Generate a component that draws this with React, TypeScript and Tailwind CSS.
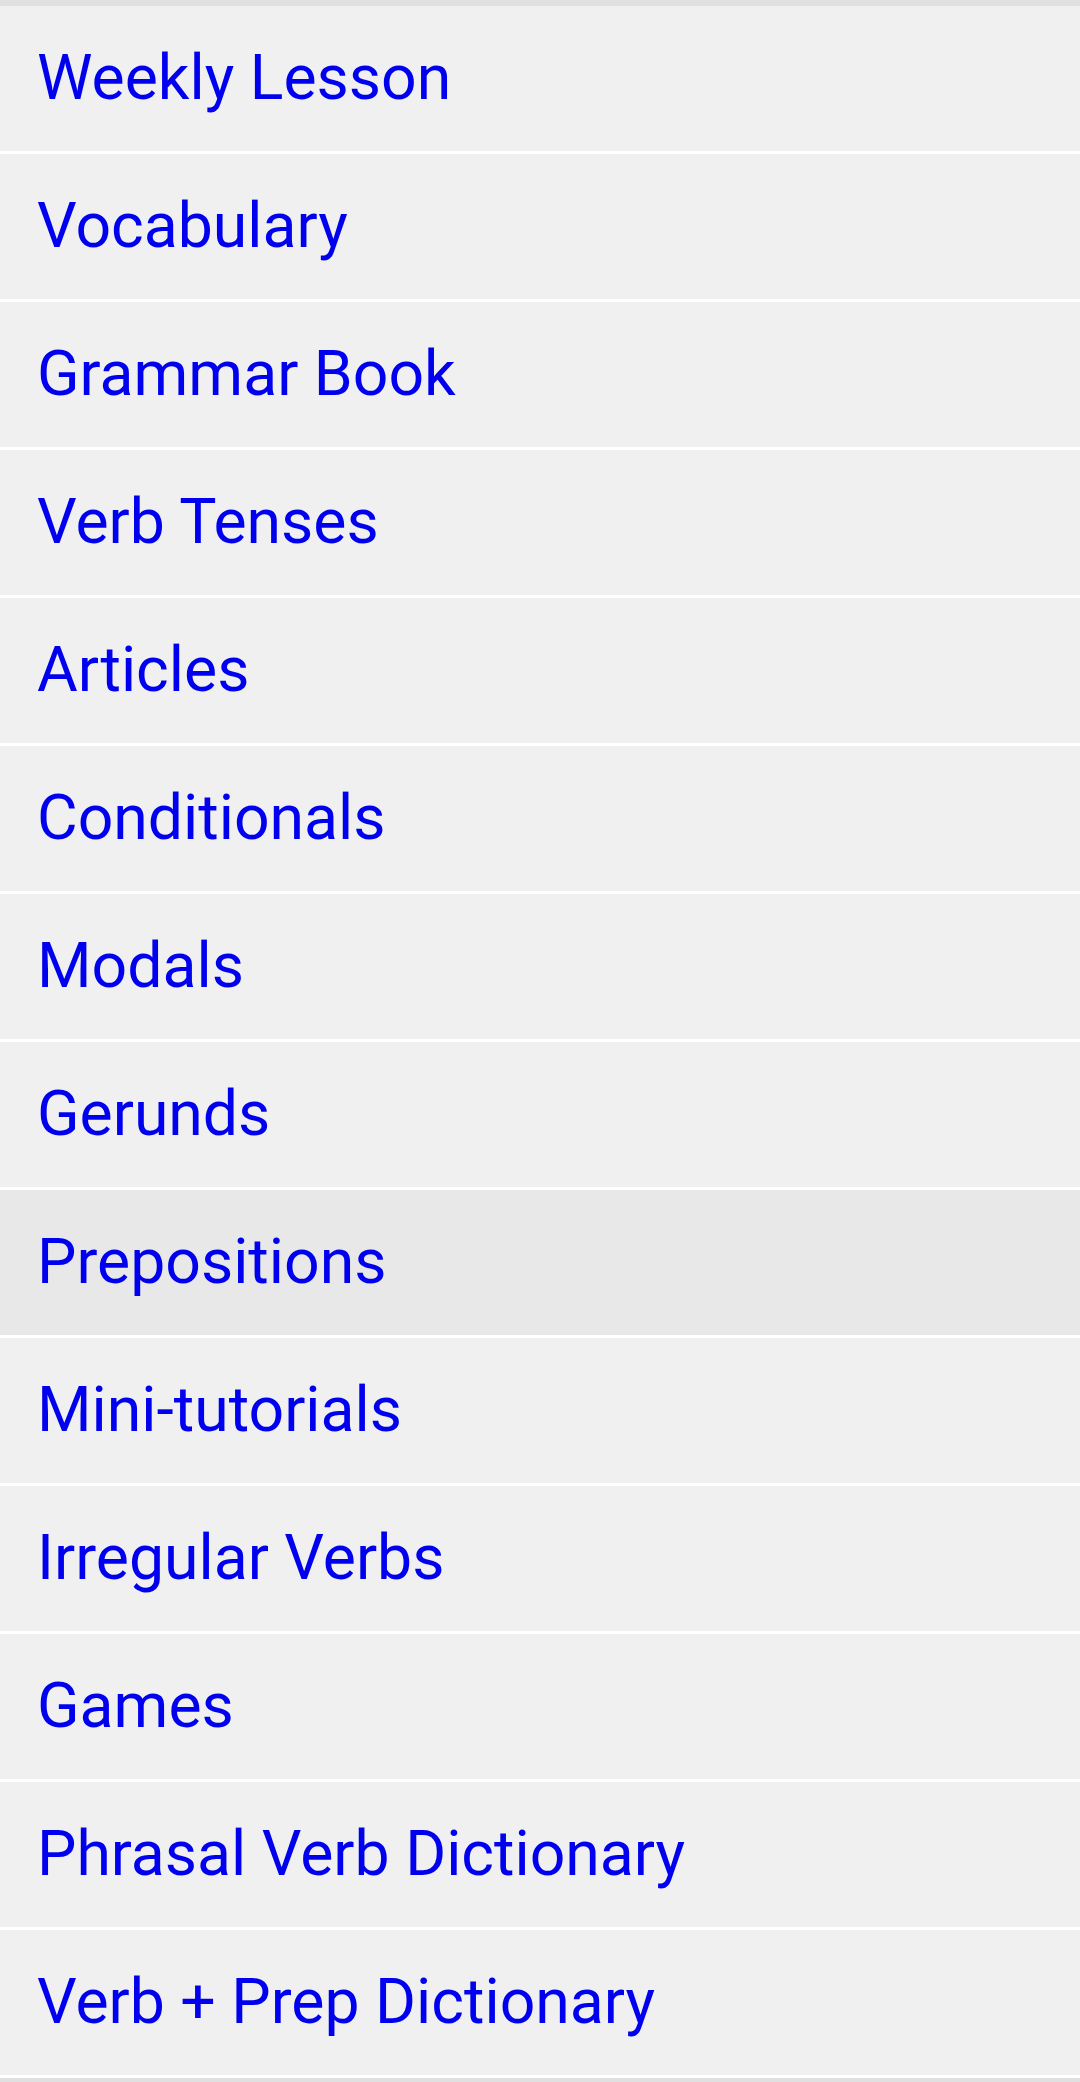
import React from "react";

const items = [
  "Weekly Lesson",
  "Vocabulary",
  "Grammar Book",
  "Verb Tenses",
  "Articles",
  "Conditionals",
  "Modals",
  "Gerunds",
  "Prepositions",
  "Mini-tutorials",
  "Irregular Verbs",
  "Games",
  "Phrasal Verb Dictionary",
  "Verb + Prep Dictionary",
];

export default function App() {
  return (
    <div
      className="w-[1080px] h-[2082px] bg-[#e0e0e0] pt-[6px] overflow-hidden"
      style={{ fontFamily: "Roboto, 'Noto Sans', sans-serif" }}
    >
      <ul className="flex flex-col">
        {items.map((label) => (
          <li
            key={label}
            className={`h-[148px] border-b-[3px] border-white ${
              label === "Prepositions" ? "bg-[#e8e8e8]" : "bg-[#f0f0f0]"
            }`}
          >
            <a
              href="#"
              className="block pl-[37px] pb-[1px] text-[62.5px] leading-[144px] text-[#0000ee]"
            >
              {label}
            </a>
          </li>
        ))}
      </ul>
    </div>
  );
}
